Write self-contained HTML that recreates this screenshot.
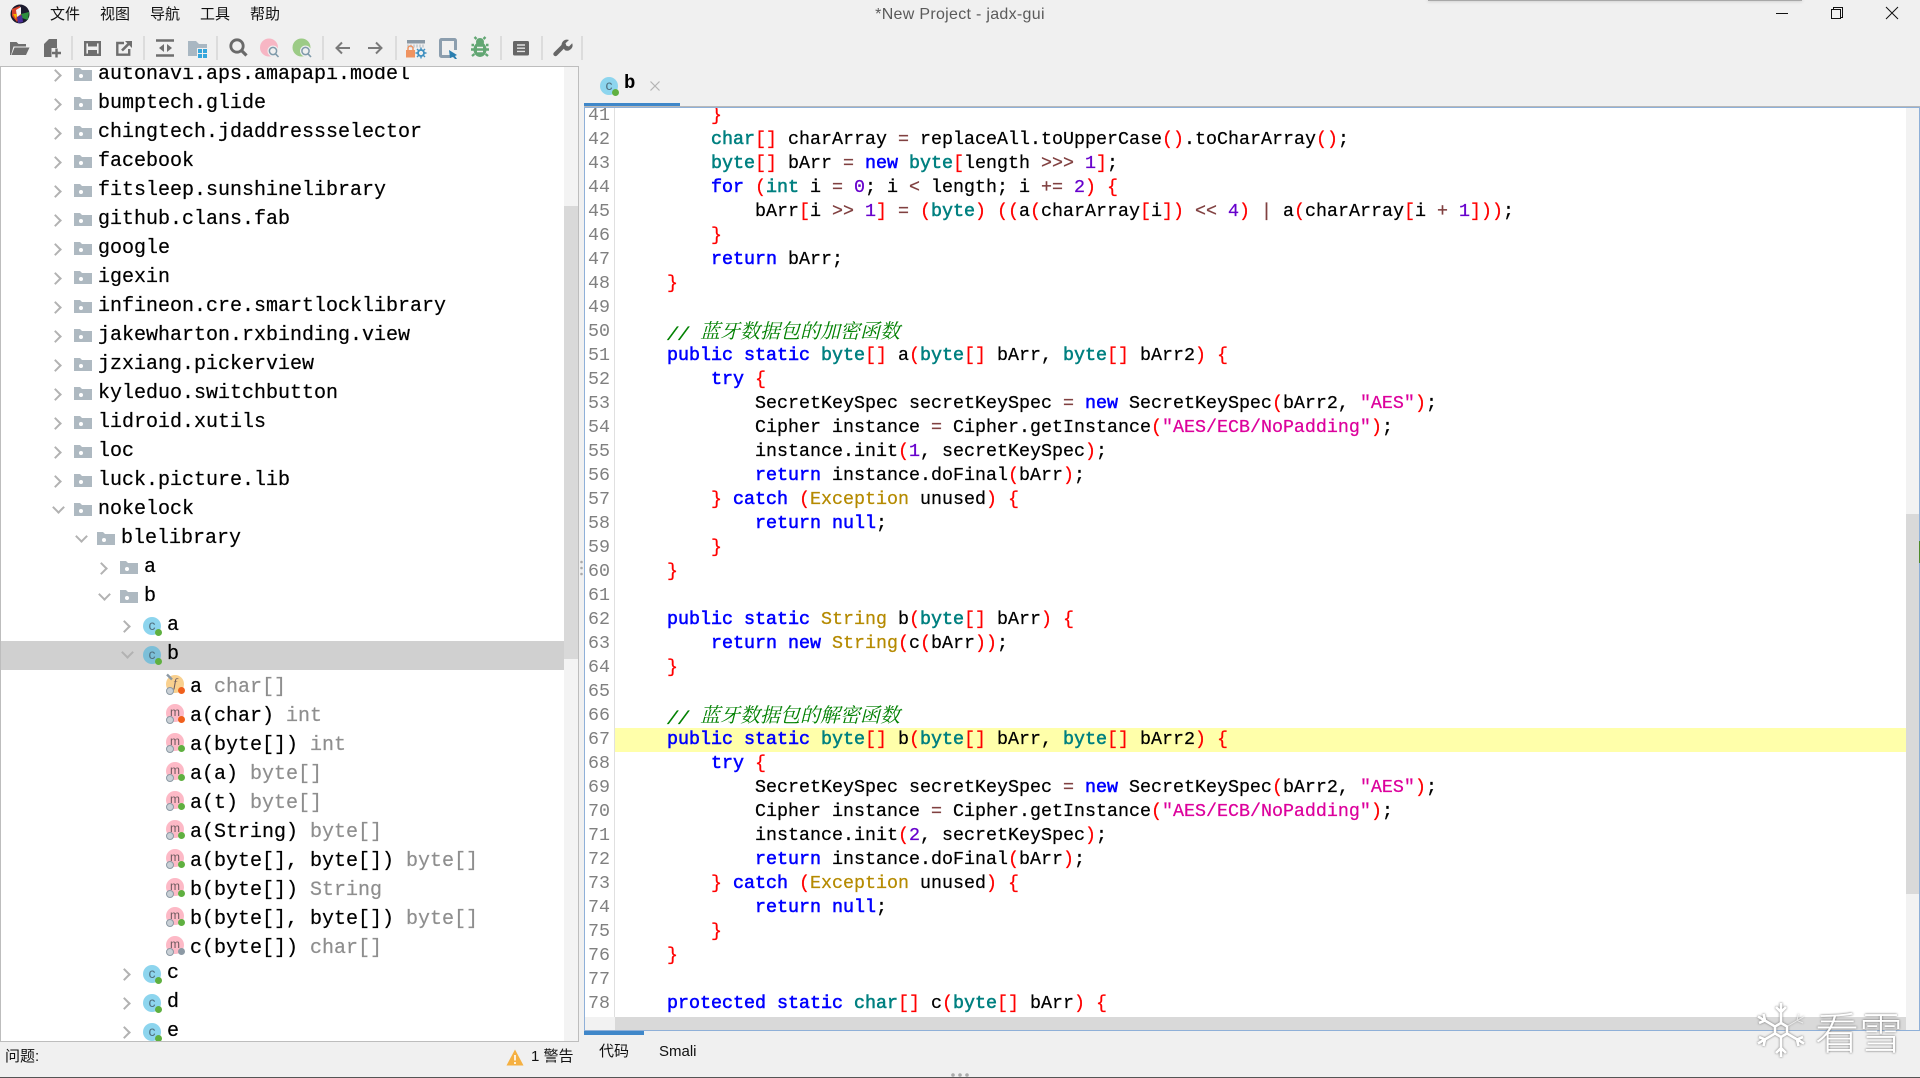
<!DOCTYPE html>
<html><head><meta charset="utf-8"><title>jadx-gui</title>
<style>
html,body{margin:0;padding:0;background:#f0f0f0;width:1920px;height:1078px;overflow:hidden}
*{box-sizing:border-box}
.a{position:absolute}
.ui{font-family:"Liberation Sans","Noto Sans CJK SC",sans-serif;font-size:15px;color:#111;white-space:pre;line-height:20px}
#tree{position:absolute;left:0;top:0;width:564px;height:1041px;overflow:hidden;clip-path:inset(67px 0 0 1px)}
.r{position:absolute;white-space:pre;font:20px/29px "Liberation Mono",monospace;color:#000;-webkit-text-stroke:.2px}
.r em{font-style:normal;color:#8e8e8e}
.cr,.cd{position:absolute;width:9px;height:9px;border-top:2px solid #b2b2b2;border-right:2px solid #b2b2b2}
.cr{transform:rotate(45deg)}.cd{transform:rotate(135deg)}
.fo{position:absolute;width:18px;height:13px}
.c,.m{position:absolute;width:18px;height:18px;border-radius:50%;text-align:center;font-family:"Liberation Sans",sans-serif;font-style:normal}
.c{left:143px;background:#8dd5ee;color:#4f6f7e;font-size:14px;line-height:16px}
.c::after,.m::after{content:"";position:absolute;width:7px;height:7px;border-radius:50%;background:#5fb040;left:12px;top:12px}
.m{left:166px;background:#fdb9c6;color:#6d5a5e;font-size:12px;line-height:16px}
.m::before{content:"";position:absolute;width:6px;height:6px;border-radius:50%;border:1.5px solid #8c99a4;background:#c9d0d6;left:0;top:12px}
.m.o{color:#6d5a5e}
.m.o::after{background:#f0601c}.m.g::after{background:#8c99a4}
.m.f{background:#f9d08e;font-family:"Liberation Serif",serif;font-style:italic;font-size:13px}
#code,#nums{position:absolute;font:18.33px/24px "Liberation Mono",monospace;color:#000}
#code div,#nums div{height:24px;white-space:pre}
#code{-webkit-text-stroke:.25px}
.k{color:#0000ff;-webkit-text-stroke:.55px}.t{color:#008080;-webkit-text-stroke:.55px}.p{color:#f00}.n{color:#6600cc}.o{color:#804040}
.s{color:#dc009c}.y{color:#b58a00}
.cm{color:#008000;font-style:italic}
.cm i{font:italic 20px/24px "Noto Serif CJK SC",serif;-webkit-text-stroke:0;position:relative;top:-2px}
</style></head><body>

<!-- top shadow -->
<div class="a" style="left:1428px;top:0;width:374px;height:1px;background:#a8a8a8;box-shadow:0 0 3px #999"></div>

<!-- logo -->
<svg class="a" style="left:8px;top:2px" width="24" height="24" viewBox="0 0 24 24">
<circle cx="12" cy="12" r="9.5" fill="#1b1b2e"/>
<path d="M4 7 L12 4 L13 13 L9 20 L4 14z" fill="#d8412a"/>
<path d="M8 8 L13 5 L13 12 L9 15z" fill="#f3f3f3"/>
<path d="M13 12 L21 10 L20 18 L14 16z" fill="#2f8f3e"/>
<path d="M9 15 L14 13 L15 20 L10 21z" fill="#4a2d9a"/>
<path d="M5 12 L9 12 L8 17z" fill="#f4b400"/>
</svg>

<!-- menu -->
<div class="a ui" style="left:50px;top:5px">文件</div>
<div class="a ui" style="left:100px;top:5px">视图</div>
<div class="a ui" style="left:150px;top:5px">导航</div>
<div class="a ui" style="left:200px;top:5px">工具</div>
<div class="a ui" style="left:250px;top:5px">帮助</div>
<div class="a ui" style="left:760px;top:5px;width:400px;text-align:center;color:#5a5a5a;font-size:16px;letter-spacing:.3px">*New Project - jadx-gui</div>

<!-- window buttons -->
<svg class="a" style="left:1770px;top:0" width="140" height="28">
<path d="M6 13.5H18" stroke="#111" stroke-width="1"/>
<path d="M63.5 9.5V7.5H72.5V17.5H70.5M61.5 9.5H70.5V18.5H61.5z" fill="none" stroke="#111" stroke-width="1"/>
<path d="M116 7L128 19M128 7L116 19" stroke="#111" stroke-width="1" fill="none"/>
</svg>

<!-- toolbar -->
<svg class="a" style="left:0;top:0" width="600" height="66" viewBox="0 0 600 66">
<g stroke="#cfcfcf" stroke-width="1.2">
<path d="M72 36V60M144 36V60M217 36V60M323 36V60M396 36V60M501 36V60M542 36V60M582 36V60"/>
</g>
<!-- open -->
<path d="M10 55V42h6.5l2 2h7.5v2.5H13.5L11 55z" fill="#6e6e6e"/><path d="M14.5 47.5H29.5L26 55H11.5z" fill="#6e6e6e"/>
<!-- new -->
<path d="M44 44l5-5h8v9h-5.5v9H44z" fill="#6e6e6e"/><path d="M56.5 48.5V57.5M52 53H61" stroke="#6e6e6e" stroke-width="2.4"/>
<!-- save -->
<rect x="85.2" y="42.2" width="14.6" height="12.6" fill="none" stroke="#6e6e6e" stroke-width="2.4"/><rect x="88" y="42" width="9" height="4.5" fill="#6e6e6e"/><rect x="88" y="50" width="9" height="5" fill="#6e6e6e"/>
<!-- export -->
<path d="M124 43H117.3V54.7H129.2V49" fill="none" stroke="#6e6e6e" stroke-width="2.4"/><path d="M122 50.5L129.5 43" stroke="#6e6e6e" stroke-width="2.6"/><path d="M125 41h7v7z" fill="#6e6e6e"/>
<!-- sync -->
<path d="M156 40.5H174M156 55.5H174" stroke="#6e6e6e" stroke-width="2.4"/><path d="M164 44L159 48L164 52zM167 44L172 48L167 52z" fill="#6e6e6e"/>
<!-- folder win -->
<path d="M188 41h8l3 3h8v12h-19z" fill="#a9b7c2"/><rect x="197" y="48" width="11" height="11" fill="#f0f0f0"/><path d="M198 49h4v4h-4zM203 49h4v4h-4zM198 54h4v4h-4zM203 54h4v4h-4z" fill="#35a6dc"/>
<!-- search -->
<circle cx="237" cy="46" r="6.2" fill="none" stroke="#6a6a6a" stroke-width="2.8"/><path d="M241.5 50.5L246.5 55.5" stroke="#6a6a6a" stroke-width="3.2"/>
<!-- pink -->
<circle cx="269" cy="47.5" r="9" fill="#f7b6c4"/><circle cx="273" cy="51" r="5.5" fill="#f0f0f0"/><circle cx="273" cy="51" r="3.6" fill="none" stroke="#7f9aaa" stroke-width="1.5"/><path d="M275.5 53.8L278.5 57" stroke="#7f9aaa" stroke-width="1.6"/>
<!-- green -->
<circle cx="301.5" cy="47.5" r="9" fill="#9ccb86"/><circle cx="305.5" cy="51" r="5.5" fill="#f0f0f0"/><circle cx="305.5" cy="51" r="3.6" fill="none" stroke="#7f9aaa" stroke-width="1.5"/><path d="M308 53.8L311 57" stroke="#7f9aaa" stroke-width="1.6"/>
<!-- arrows -->
<path d="M350 48H337M342 42.5L336.5 48L342 53.5" fill="none" stroke="#7a7a7a" stroke-width="2"/>
<path d="M368 48H381M376 42.5L381.5 48L376 53.5" fill="none" stroke="#7a7a7a" stroke-width="2"/>
<!-- deobf -->
<rect x="407" y="40" width="18" height="3.5" fill="#8a98a4"/><path d="M408 44.5v3M411 44.5v3M414 44.5v3M417 44.5v3M420 44.5v3M423 44.5v3" stroke="#a8b2ba" stroke-width="1"/>
<rect x="406" y="50" width="9" height="7.5" fill="#ef9360"/><path d="M408 50v-1.5a2.5 2.5 0 0 1 5 0V50" fill="none" stroke="#ef9360" stroke-width="1.5"/>
<circle cx="421" cy="53" r="3" fill="none" stroke="#3e8fc0" stroke-width="1.8"/><path d="M421 47.5v2M421 56.5v2M415.5 53h2M424.5 53h2M417 49l1.5 1.5M423.5 55.5l1.5 1.5M425 49l-1.5 1.5M418.5 55.5L417 57" stroke="#3e8fc0" stroke-width="1.4"/>
<!-- bookmark -->
<path d="M451 56.5H441.5a1 1 0 0 1-1-1V40.5a1 1 0 0 1 1-1H454.5a1 1 0 0 1 1 1V50" fill="none" stroke="#8c9eae" stroke-width="3"/>
<path d="M449 50L457 55L455 56L457 59L455 59L453 57L450 58z" fill="#2c7fb0"/>
<!-- bug -->
<ellipse cx="480" cy="49.5" rx="6.5" ry="7.5" fill="#62a673"/><circle cx="480" cy="42" r="4" fill="#62a673"/><path d="M476.5 39L474.5 37M483.5 39L485.5 37M474 45H471.5M486 45H488.5M474 49.5H471M486 49.5H489M474.5 54L472 56M485.5 54L488 56" stroke="#62a673" stroke-width="2.4"/><path d="M477 47.5h6M477 51.5h6" stroke="#f0f0f0" stroke-width="1.6"/>
<!-- log -->
<rect x="513" y="41" width="16" height="14.5" rx="1.5" fill="#666"/><path d="M517 45H525M517 48.2H525M517 51.4H525" stroke="#e4e4e4" stroke-width="1.4"/>
<!-- wrench -->
<path d="M555.5 54L564 45.5" stroke="#666" stroke-width="4.4" stroke-linecap="round"/><path d="M561.5 45a5.5 5.5 0 0 1 7.5-5l-3.5 3.2.8 2.6 2.7.7 3.2-3.3a5.5 5.5 0 0 1-7.3 7z" fill="#666"/>
</svg>

<!-- tree frame -->
<div class="a" style="left:0;top:66px;width:579px;height:976px;background:#fff;border:1px solid #bdbdbd"></div>
<div class="a" style="left:564px;top:67px;width:14px;height:974px;background:#f3f3f3"></div>
<div class="a" style="left:564px;top:206px;width:14px;height:453px;background:#d9d9d9"></div>

<svg width="0" height="0" style="position:absolute"><symbol id="fold" viewBox="0 0 18 13"><path d="M0 0h6l2 2h10v11H0z" fill="#aeb9c1"/><circle cx="7" cy="8" r="2" fill="#fff"/></symbol></svg>

<div id="tree">
<div class="a" style="left:1px;top:641px;width:563px;height:29px;background:#d0d0d0"></div>

<i class="cr" style="left:51px;top:71px"></i><svg class="fo" style="left:74px;top:68px"><use href="#fold"/></svg><div class="r" style="left:98px;top:60px">autonavi.aps.amapapi.model</div>
<i class="cr" style="left:51px;top:100px"></i><svg class="fo" style="left:74px;top:97px"><use href="#fold"/></svg><div class="r" style="left:98px;top:89px">bumptech.glide</div>
<i class="cr" style="left:51px;top:129px"></i><svg class="fo" style="left:74px;top:126px"><use href="#fold"/></svg><div class="r" style="left:98px;top:118px">chingtech.jdaddressselector</div>
<i class="cr" style="left:51px;top:158px"></i><svg class="fo" style="left:74px;top:155px"><use href="#fold"/></svg><div class="r" style="left:98px;top:147px">facebook</div>
<i class="cr" style="left:51px;top:187px"></i><svg class="fo" style="left:74px;top:184px"><use href="#fold"/></svg><div class="r" style="left:98px;top:176px">fitsleep.sunshinelibrary</div>
<i class="cr" style="left:51px;top:216px"></i><svg class="fo" style="left:74px;top:213px"><use href="#fold"/></svg><div class="r" style="left:98px;top:205px">github.clans.fab</div>
<i class="cr" style="left:51px;top:245px"></i><svg class="fo" style="left:74px;top:242px"><use href="#fold"/></svg><div class="r" style="left:98px;top:234px">google</div>
<i class="cr" style="left:51px;top:274px"></i><svg class="fo" style="left:74px;top:271px"><use href="#fold"/></svg><div class="r" style="left:98px;top:263px">igexin</div>
<i class="cr" style="left:51px;top:303px"></i><svg class="fo" style="left:74px;top:300px"><use href="#fold"/></svg><div class="r" style="left:98px;top:292px">infineon.cre.smartlocklibrary</div>
<i class="cr" style="left:51px;top:332px"></i><svg class="fo" style="left:74px;top:329px"><use href="#fold"/></svg><div class="r" style="left:98px;top:321px">jakewharton.rxbinding.view</div>
<i class="cr" style="left:51px;top:361px"></i><svg class="fo" style="left:74px;top:358px"><use href="#fold"/></svg><div class="r" style="left:98px;top:350px">jzxiang.pickerview</div>
<i class="cr" style="left:51px;top:390px"></i><svg class="fo" style="left:74px;top:387px"><use href="#fold"/></svg><div class="r" style="left:98px;top:379px">kyleduo.switchbutton</div>
<i class="cr" style="left:51px;top:419px"></i><svg class="fo" style="left:74px;top:416px"><use href="#fold"/></svg><div class="r" style="left:98px;top:408px">lidroid.xutils</div>
<i class="cr" style="left:51px;top:448px"></i><svg class="fo" style="left:74px;top:445px"><use href="#fold"/></svg><div class="r" style="left:98px;top:437px">loc</div>
<i class="cr" style="left:51px;top:477px"></i><svg class="fo" style="left:74px;top:474px"><use href="#fold"/></svg><div class="r" style="left:98px;top:466px">luck.picture.lib</div>
<i class="cd" style="left:53.5px;top:503px"></i><svg class="fo" style="left:74px;top:503px"><use href="#fold"/></svg><div class="r" style="left:98px;top:495px">nokelock</div>
<i class="cd" style="left:76.5px;top:532px"></i><svg class="fo" style="left:97px;top:532px"><use href="#fold"/></svg><div class="r" style="left:121px;top:524px">blelibrary</div>
<i class="cr" style="left:97px;top:564px"></i><svg class="fo" style="left:120px;top:561px"><use href="#fold"/></svg><div class="r" style="left:144px;top:553px">a</div>
<i class="cd" style="left:99.5px;top:590px"></i><svg class="fo" style="left:120px;top:590px"><use href="#fold"/></svg><div class="r" style="left:144px;top:582px">b</div>

<i class="cr" style="left:120px;top:622px"></i><i class="c" style="top:617px">c</i><div class="r" style="left:167px;top:611px">a</div>
<i class="cd" style="left:122.5px;top:648px"></i><i class="c" style="top:646px;background:#7cbfd8">c</i><div class="r" style="left:167px;top:640px">b</div>

<i class="m f o" style="top:675px">f</i><svg class="a" style="left:165px;top:673px" width="9" height="9"><path d="M2 1.5L7 6.5" stroke="#8c99a4" stroke-width="2.4"/></svg><div class="r" style="left:190px;top:673px">a <em>char[]</em></div>
<i class="m o" style="top:704px">m</i><div class="r" style="left:190px;top:702px">a(char) <em>int</em></div>
<i class="m" style="top:733px">m</i><div class="r" style="left:190px;top:731px">a(byte[]) <em>int</em></div>
<i class="m" style="top:762px">m</i><div class="r" style="left:190px;top:760px">a(a) <em>byte[]</em></div>
<i class="m" style="top:791px">m</i><div class="r" style="left:190px;top:789px">a(t) <em>byte[]</em></div>
<i class="m" style="top:820px">m</i><div class="r" style="left:190px;top:818px">a(String) <em>byte[]</em></div>
<i class="m" style="top:849px">m</i><div class="r" style="left:190px;top:847px">a(byte[], byte[]) <em>byte[]</em></div>
<i class="m" style="top:878px">m</i><div class="r" style="left:190px;top:876px">b(byte[]) <em>String</em></div>
<i class="m" style="top:907px">m</i><div class="r" style="left:190px;top:905px">b(byte[], byte[]) <em>byte[]</em></div>
<i class="m g" style="top:936px">m</i><div class="r" style="left:190px;top:934px">c(byte[]) <em>char[]</em></div>

<i class="cr" style="left:120px;top:970px"></i><i class="c" style="top:965px">c</i><div class="r" style="left:167px;top:959px">c</div>
<i class="cr" style="left:120px;top:999px"></i><i class="c" style="top:994px">c</i><div class="r" style="left:167px;top:988px">d</div>
<i class="cr" style="left:120px;top:1028px"></i><i class="c" style="top:1023px">c</i><div class="r" style="left:167px;top:1017px">e</div>
</div>

<!-- divider dots -->
<svg class="a" style="left:578px;top:558px" width="8" height="24"><circle cx="3.5" cy="4" r="1.3" fill="#aaa"/><circle cx="3.5" cy="10" r="1.3" fill="#aaa"/><circle cx="3.5" cy="16" r="1.3" fill="#aaa"/></svg>

<!-- editor tab -->
<i class="c" style="left:600px;top:77px">c</i>
<div class="a" style="left:624px;top:72px;font:bold 19px/22px 'Liberation Mono',monospace;color:#000">b</div>
<svg class="a" style="left:649px;top:80px" width="12" height="12"><path d="M1.5 1.5L10.5 10.5M10.5 1.5L1.5 10.5" stroke="#b4b4b4" stroke-width="1.2"/></svg>
<div class="a" style="left:584px;top:103px;width:96px;height:4px;background:#3f87c9"></div>

<!-- editor frame -->
<div class="a" style="left:584px;top:106px;width:1336px;height:1px;background:#b8b8b8"></div>
<div class="a" style="left:584px;top:107px;width:1336px;height:924px;background:#fff;border:1px solid #8fb0d8"></div>
<div class="a" style="left:614px;top:108px;width:1px;height:909px;background:#e0e0e0"></div>
<div class="a" style="left:585px;top:1017px;width:30px;height:13px;background:#f2f2f2"></div>
<div class="a" style="left:615px;top:1017px;width:1304px;height:13px;background:#d9d9d9"></div>
<div class="a" style="left:1906px;top:108px;width:13px;height:922px;background:#f2f2f2"></div>
<div class="a" style="left:1906px;top:514px;width:13px;height:380px;background:#d9d9d9"></div>
<div class="a" style="left:1919px;top:541px;width:1px;height:22px;background:#4d8a2c"></div>
<div class="a" style="left:615px;top:728px;width:1291px;height:24px;background:#ffffaa"></div>

<div class="a" style="left:585px;top:108px;width:29px;height:909px;overflow:hidden">
<div id="nums" style="left:3px;top:-4px;color:#808080"><div>41</div><div>42</div><div>43</div><div>44</div><div>45</div><div>46</div><div>47</div><div>48</div><div>49</div><div>50</div><div>51</div><div>52</div><div>53</div><div>54</div><div>55</div><div>56</div><div>57</div><div>58</div><div>59</div><div>60</div><div>61</div><div>62</div><div>63</div><div>64</div><div>65</div><div>66</div><div>67</div><div>68</div><div>69</div><div>70</div><div>71</div><div>72</div><div>73</div><div>74</div><div>75</div><div>76</div><div>77</div><div>78</div></div>
</div>

<div class="a" style="left:615px;top:108px;width:1291px;height:909px;overflow:hidden">
<div id="code" style="left:8px;top:-4px">
<div>        <span class="p">}</span></div>
<div>        <span class="t">char</span><span class="p">[]</span> charArray <span class="o">=</span> replaceAll.toUpperCase<span class="p">()</span>.toCharArray<span class="p">()</span>;</div>
<div>        <span class="t">byte</span><span class="p">[]</span> bArr <span class="o">=</span> <span class="k">new</span> <span class="t">byte</span><span class="p">[</span>length <span class="o">&gt;&gt;&gt;</span> <span class="n">1</span><span class="p">]</span>;</div>
<div>        <span class="k">for</span> <span class="p">(</span><span class="t">int</span> i <span class="o">=</span> <span class="n">0</span>; i <span class="o">&lt;</span> length; i <span class="o">+=</span> <span class="n">2</span><span class="p">)</span> <span class="p">{</span></div>
<div>            bArr<span class="p">[</span>i <span class="o">&gt;&gt;</span> <span class="n">1</span><span class="p">]</span> <span class="o">=</span> <span class="p">(</span><span class="t">byte</span><span class="p">)</span> <span class="p">((</span>a<span class="p">(</span>charArray<span class="p">[</span>i<span class="p">])</span> <span class="o">&lt;&lt;</span> <span class="n">4</span><span class="p">)</span> <span class="o">|</span> a<span class="p">(</span>charArray<span class="p">[</span>i <span class="o">+</span> <span class="n">1</span><span class="p">]))</span>;</div>
<div>        <span class="p">}</span></div>
<div>        <span class="k">return</span> bArr;</div>
<div>    <span class="p">}</span></div>
<div> </div>
<div class="cm">    // <i>蓝牙数据包的加密函数</i></div>
<div>    <span class="k">public</span> <span class="k">static</span> <span class="t">byte</span><span class="p">[]</span> a<span class="p">(</span><span class="t">byte</span><span class="p">[]</span> bArr, <span class="t">byte</span><span class="p">[]</span> bArr2<span class="p">)</span> <span class="p">{</span></div>
<div>        <span class="k">try</span> <span class="p">{</span></div>
<div>            SecretKeySpec secretKeySpec <span class="o">=</span> <span class="k">new</span> SecretKeySpec<span class="p">(</span>bArr2, <span class="s">"AES"</span><span class="p">)</span>;</div>
<div>            Cipher instance <span class="o">=</span> Cipher.getInstance<span class="p">(</span><span class="s">"AES/ECB/NoPadding"</span><span class="p">)</span>;</div>
<div>            instance.init<span class="p">(</span><span class="n">1</span>, secretKeySpec<span class="p">)</span>;</div>
<div>            <span class="k">return</span> instance.doFinal<span class="p">(</span>bArr<span class="p">)</span>;</div>
<div>        <span class="p">}</span> <span class="k">catch</span> <span class="p">(</span><span class="y">Exception</span> unused<span class="p">)</span> <span class="p">{</span></div>
<div>            <span class="k">return</span> <span class="k">null</span>;</div>
<div>        <span class="p">}</span></div>
<div>    <span class="p">}</span></div>
<div> </div>
<div>    <span class="k">public</span> <span class="k">static</span> <span class="y">String</span> b<span class="p">(</span><span class="t">byte</span><span class="p">[]</span> bArr<span class="p">)</span> <span class="p">{</span></div>
<div>        <span class="k">return</span> <span class="k">new</span> <span class="y">String</span><span class="p">(</span>c<span class="p">(</span>bArr<span class="p">))</span>;</div>
<div>    <span class="p">}</span></div>
<div> </div>
<div class="cm">    // <i>蓝牙数据包的解密函数</i></div>
<div>    <span class="k">public</span> <span class="k">static</span> <span class="t">byte</span><span class="p">[]</span> b<span class="p">(</span><span class="t">byte</span><span class="p">[]</span> bArr, <span class="t">byte</span><span class="p">[]</span> bArr2<span class="p">)</span> <span class="p">{</span></div>
<div>        <span class="k">try</span> <span class="p">{</span></div>
<div>            SecretKeySpec secretKeySpec <span class="o">=</span> <span class="k">new</span> SecretKeySpec<span class="p">(</span>bArr2, <span class="s">"AES"</span><span class="p">)</span>;</div>
<div>            Cipher instance <span class="o">=</span> Cipher.getInstance<span class="p">(</span><span class="s">"AES/ECB/NoPadding"</span><span class="p">)</span>;</div>
<div>            instance.init<span class="p">(</span><span class="n">2</span>, secretKeySpec<span class="p">)</span>;</div>
<div>            <span class="k">return</span> instance.doFinal<span class="p">(</span>bArr<span class="p">)</span>;</div>
<div>        <span class="p">}</span> <span class="k">catch</span> <span class="p">(</span><span class="y">Exception</span> unused<span class="p">)</span> <span class="p">{</span></div>
<div>            <span class="k">return</span> <span class="k">null</span>;</div>
<div>        <span class="p">}</span></div>
<div>    <span class="p">}</span></div>
<div> </div>
<div>    <span class="k">protected</span> <span class="k">static</span> <span class="t">char</span><span class="p">[]</span> c<span class="p">(</span><span class="t">byte</span><span class="p">[]</span> bArr<span class="p">)</span> <span class="p">{</span></div>
</div>
</div>

<!-- bottom tabs -->
<div class="a" style="left:584px;top:1031px;width:60px;height:4px;background:#3f87c9"></div>
<div class="a ui" style="left:599px;top:1042px">代码</div>
<div class="a ui" style="left:659px;top:1042px">Smali</div>

<!-- status -->
<div class="a ui" style="left:5px;top:1047px">问题:</div>
<svg class="a" style="left:506px;top:1049px" width="18" height="17"><path d="M9 .5L17.5 16.5H.5z" fill="#f5b041"/><path d="M9 6V11.5M9 13V15" stroke="#fff" stroke-width="1.6"/></svg>
<div class="a ui" style="left:531px;top:1047px">1 警告</div>
<svg class="a" style="left:950px;top:1072px" width="20" height="5"><circle cx="3" cy="3" r="1.8" fill="#aaa"/><circle cx="10" cy="3" r="1.8" fill="#aaa"/><circle cx="17" cy="3" r="1.8" fill="#aaa"/></svg>
<div class="a" style="left:0;top:1077px;width:1920px;height:1px;background:#555"></div>

<!-- watermark -->
<svg class="a" style="left:1750px;top:998px;filter:drop-shadow(0 0 1px #666)" width="62" height="64" viewBox="-31 -32 62 64">
<g fill="none" stroke="#fff" stroke-width="2.6">
<path d="M0 -7V-27M-5 -23L0 -18L5 -23M0 7V27M-5 23L0 18L5 23"/>
<path d="M-6 -3.5L-23 -13.5M-22 -7L-16 -9.5L-17.5 -16M6 3.5L23 13.5M22 7L16 9.5L17.5 16"/>
<path d="M-6 3.5L-23 13.5M-22 7L-16 9.5L-17.5 16"/>
<path d="M6 -3.5L23 -13.5M22 -7L16 -9.5L-17.5 -16" stroke-width="0" opacity="0"/>
<path d="M6 -3.5L23 -13.5M22 -7L16 -9.5L17.5 -16" stroke-width="1" opacity=".7"/>
<path d="M0 -7L6 -3.5V3.5L0 7L-6 3.5V-3.5z"/>
</g></svg>
<div class="a" style="left:1815px;top:1002px;font:44px/56px 'Noto Sans CJK SC',sans-serif;font-weight:300;color:#fff;text-shadow:0 0 2px #555;white-space:pre">看雪</div>

</body></html>
